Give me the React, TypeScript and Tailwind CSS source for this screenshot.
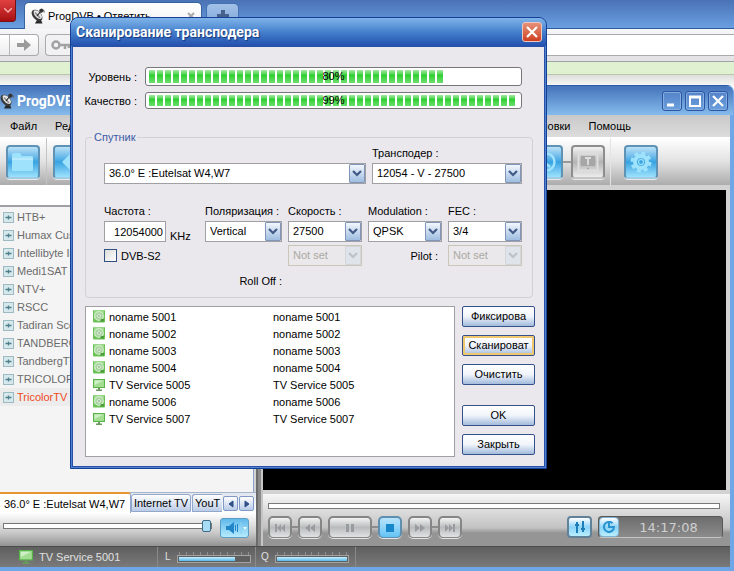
import { useState, type ReactNode } from 'react'
import clsx from 'clsx'

const providers = [
  'HTB+',
  'Humax Custom',
  'Intellibyte Inc',
  'Medi1SAT',
  'NTV+',
  'RSCC',
  'Tadiran Scopus',
  'TANDBERG',
  'TandbergTV',
  'TRICOLOR',
  'TricolorTV',
]

const services = [
  { name: 'noname 5001', kind: 'data' },
  { name: 'noname 5002', kind: 'data' },
  { name: 'noname 5003', kind: 'data' },
  { name: 'noname 5004', kind: 'data' },
  { name: 'TV Service 5005', kind: 'tv' },
  { name: 'noname 5006', kind: 'data' },
  { name: 'TV Service 5007', kind: 'tv' },
]

function DishIcon({ className }: { className?: string }) {
  return (
    <svg viewBox="0 0 14 16" className={className} aria-hidden="true">
      <path d="M7 10l3 2 1.500 3.500H4z" fill="#2a2a2a" />
      <ellipse cx="6" cy="7.300" rx="4.200" ry="6.600" transform="rotate(-42 6 7.300)" fill="#3a3a3a" />
      <ellipse cx="6.800" cy="6.600" rx="2.900" ry="5.400" transform="rotate(-42 6.800 6.600)" fill="#e6e6e6" />
      <path d="M4 4.500l5 5.500" stroke="#8a8a8a" strokeWidth="1.500" fill="none" />
      <path d="M6 8l4-5" stroke="#222" strokeWidth="1.200" fill="none" />
      <circle cx="10.200" cy="2.800" r="2" fill="#333" />
      <path d="M10.500 0.800a3.500 3.500 0 0 1 2.700 3.700" stroke="#444" fill="none" />
    </svg>
  )
}

function DiscIcon() {
  return (
    <svg viewBox="0 0 12 13" className="h-[13px] w-3" aria-hidden="true">
      <rect x="0" y="0" width="12" height="12.500" rx="1" fill="#6cc257" />
      <path d="M1 0h10v3L1 9z" fill="#9ad98a" />
      <circle cx="6" cy="6" r="4.300" fill="#a9d5a0" stroke="#cdebc6" strokeWidth="1.300" />
      <circle cx="6" cy="6" r="1.400" fill="#6f9d6a" stroke="#eef9ec" />
      <path d="M8 9h3v2.500H7z" fill="#4c9e3c" />
    </svg>
  )
}

function TvIcon({ className }: { className?: string }) {
  return (
    <svg viewBox="0 0 12 12" className={className} aria-hidden="true">
      <rect x="0.500" y="0.500" width="11" height="8" fill="#a2dd92" stroke="#58b348" />
      <path d="M1.500 1.500h9L1.500 6z" fill="#cff0c6" />
      <path d="M5 9h2v1.500h2V12H3v-1.500h2z" fill="#6a9a60" />
    </svg>
  )
}

function Combo({ id, options, label, disabled }: { id: string; options: string[]; label?: string; disabled?: boolean }) {
  return (
    <div className="grid w-full">
      <select
        id={id}
        aria-label={label}
        disabled={disabled}
        className={clsx(
          'col-start-1 row-start-1 h-[21px] w-full appearance-none border pr-4 pl-1 text-[11px] leading-none outline-none',
          disabled ? 'border-[#c9c7ba] bg-[#eae8ea] text-[#aaa8a4] opacity-100' : 'border-[#a0a0a4] bg-white text-black',
        )}
      >
        {options.map((o) => (
          <option key={o}>{o}</option>
        ))}
      </select>
      <span
        className={clsx(
          'pointer-events-none col-start-1 row-start-1 mr-px flex h-[19px] w-4 items-center justify-center self-center justify-self-end rounded-[1px] border',
          disabled
            ? 'border-[#d3d5da] bg-[#dfe4ea] text-[#bcc1c8]'
            : 'border-[#8095b8] bg-linear-to-b from-[#f2f7fd] to-[#9fbde0] text-[#3f5a86]',
        )}
      >
        <svg viewBox="0 0 10 7" className="h-[7px] w-[10px]" aria-hidden="true">
          <path d="M1 1l4 4 4-4" fill="none" stroke="currentColor" strokeWidth="2.200" />
        </svg>
      </span>
    </div>
  )
}

function Progress({ value, id, tall }: { value: number; id: string; tall?: boolean }) {
  const blocks = Array.from({ length: Math.round((46.5 * value) / 100) })
  return (
    <div
      role="progressbar"
      aria-labelledby={id}
      aria-valuenow={value}
      className={clsx('grid flex-1 rounded-[3px] border border-[#777779] bg-white', tall ? 'h-[19px]' : 'h-[17px]')}
    >
      <div className="col-start-1 row-start-1 flex gap-[2px] px-[3px] py-[2px]">
        {blocks.map((_, i) => (
          <span key={i} className="w-[6px] bg-linear-to-b from-[#a2e8a4] via-[#2bcf2f] via-40% to-[#6ade6d]" />
        ))}
      </div>
      <span className="col-start-1 row-start-1 self-center text-center leading-none">{value}%</span>
    </div>
  )
}

function PushButton({ children, hot, className }: { children: ReactNode; hot?: boolean; className?: string }) {
  return (
    <button
      type="button"
      className={clsx(
        'h-[21px] w-full overflow-hidden rounded-[2px] border border-[#34518c] bg-linear-to-b from-white via-[#f0f4fa] to-[#a3bbdc] text-[11px] leading-none whitespace-nowrap',
        hot && 'shadow-[inset_0_0_0_2px_#f0c870]',
        className,
      )}
    >
      {children}
    </button>
  )
}

function ToolButton({ label, off, children }: { label: string; off?: boolean; children: ReactNode }) {
  return (
    <button
      type="button"
      aria-label={label}
      className={clsx(
        'flex h-[34px] w-[34px] shrink-0 items-center justify-center rounded-[4px] border-2 shadow-[0_1px_0_#e8e8e8]',
        off
          ? 'border-[#8d8d8d] border-b-[#c5c5c5] bg-linear-to-b from-[#f2f2f2] via-[#b4b4b4] to-[#ededed] text-[#dedede]'
          : 'border-[#5e93b5] border-b-[#9fcbe4] bg-linear-to-b from-[#b9e1f6] via-[#35a3e2] to-[#9be2fc] text-[#9ee2fc]',
      )}
    >
      {children}
    </button>
  )
}

function PlayButton({ label, on, wide, children }: { label: string; on?: boolean; wide?: boolean; children: ReactNode }) {
  return (
    <button
      type="button"
      aria-label={label}
      className={clsx(
        'flex h-[22px] shrink-0 items-center justify-center rounded-[5px] border-2 border-b shadow-[0_1px_0_#e6e6e6]',
        wide ? 'w-[44px]' : 'w-[24px]',
        on
          ? 'border-[#5f8fae] bg-linear-to-b from-[#b8e4fb] to-[#62c3f5] text-[#1886cb]'
          : 'border-[#858585] bg-linear-to-b from-[#f3f3f3] via-[#b9bcbd] to-[#e0e2e3] text-[#999c9e]',
      )}
    >
      <svg viewBox="0 0 12 10" className="h-[10px] w-3" fill="currentColor" aria-hidden="true">
        {children}
      </svg>
    </button>
  )
}

function Link() {
  return <span className="h-[2px] w-[6px] bg-[#8c8c8c]" />
}

function Meter({ label, value }: { label: string; value: number }) {
  return (
    <div role="meter" aria-label={label} aria-valuenow={value} className="w-[74px]">
      <div className="flex justify-between px-[2px]">
        {Array.from({ length: 11 }).map((_, i) => (
          <span key={i} className="h-[3px] w-px bg-[#8f8f8f]" />
        ))}
      </div>
      <div className="h-[8px] border border-[#a3a3a3] bg-[#5f5f5f] p-px">
        <div className="h-full bg-linear-to-b from-[#c9effd] to-[#4db9ec]" style={{ width: `${value}%` }} />
      </div>
    </div>
  )
}

function Browser() {
  return (
    <div>
      <div className="flex h-[29px] items-end border-b border-[#2d5c9e] bg-linear-to-b from-[#4a73b5] to-[#6a9fe2]">
        <button type="button" aria-label="Меню" className="flex h-[22px] w-4 items-center justify-center self-start rounded-br-[4px] border-r border-b border-[#7a1010] bg-linear-to-b from-[#e04040] to-[#a80c10]">
          <svg viewBox="0 0 8 5" className="h-[5px] w-2" aria-hidden="true">
            <path d="M0 0l4 4 4-4" fill="none" stroke="#ffb0b0" strokeWidth="1.400" />
          </svg>
        </button>
        <div className="-mb-px ml-2 flex h-[27px] w-[178px] items-center rounded-t-[5px] border-x border-t border-[#39639f] bg-linear-to-b from-white to-[#f1f1f4] px-[6px]">
          <DishIcon className="h-4 w-[14px]" />
          <span className="ml-[3px] flex-1">ProgDVB • Ответить</span>
          <button type="button" aria-label="Закрыть вкладку">
            <svg viewBox="0 0 8 8" className="h-2 w-2" aria-hidden="true">
              <path d="M1 1l6 6M7 1L1 7" stroke="#aaa" strokeWidth="2" />
            </svg>
          </button>
        </div>
        <button type="button" aria-label="Новая вкладка" className="ml-1 flex h-[25px] w-[33px] items-center justify-center rounded-t-[5px] border border-[#4272b4] bg-linear-to-b from-[#a3c1e6] to-[#7ba5dc]">
          <svg viewBox="0 0 12 12" className="h-3 w-3" aria-hidden="true">
            <path d="M6 0v12M0 6h12" stroke="#46618b" strokeWidth="4" />
          </svg>
        </button>
      </div>
      <div className="flex h-[33px] items-center border-b border-[#a3a3a6] bg-linear-to-b from-[#f6f6f8] to-[#e2e2e5]">
        <div className="flex h-[22px] w-[39px] rounded-r-[4px] border border-l-0 border-[#aaaaac] bg-linear-to-b from-white to-[#ececee]">
          <span className="w-[10px] border-r border-[#b8b8ba]" />
          <button type="button" aria-label="Вперёд" className="flex flex-1 items-center justify-center">
            <svg viewBox="0 0 14 12" className="h-3 w-[14px]" aria-hidden="true">
              <path d="M0 4h7V0l7 6-7 6V8H0z" fill="#9b9b9b" />
            </svg>
          </button>
        </div>
        <div className="ml-[6px] flex h-[22px] flex-1 items-center rounded-l-[4px] border border-r-0 border-[#aaaaac] bg-linear-to-r from-[#f2f2f4] from-[40px] to-white to-[60px] pl-[5px]">
          <svg viewBox="0 0 20 10" className="h-[10px] w-5" fill="none" stroke="#a2a2a2" strokeWidth="2.500" aria-hidden="true">
            <circle cx="5" cy="5" r="3.500" />
            <path d="M8 5h11M14 5v4M18 5v3" />
          </svg>
        </div>
      </div>
      <div className="h-[13px] border-b border-[#b8c8a6] bg-[#e0f1d2]" />
      <div className="h-[12px] bg-linear-to-b from-[#ddd] to-[#fbfbf6]" />
    </div>
  )
}

function CaptionButton({ label, children }: { label: string; children: ReactNode }) {
  return (
    <button type="button" aria-label={label} className="flex h-5 w-5 items-center justify-center rounded-[3px] border border-[#2a56a4] bg-linear-to-b from-[#5583c8] to-[#6a9fdd] shadow-[inset_0_0_0_1px_#86ade0]">
      <svg viewBox="0 0 12 12" className="h-3 w-3" fill="none" stroke="#fff" strokeWidth="2" aria-hidden="true">
        {children}
      </svg>
    </button>
  )
}

function Sidebar() {
  const [volume, setVolume] = useState(100)
  return (
    <aside className="flex w-[256px] shrink-0 flex-col">
      <div className="h-5 shrink-0 bg-white" />
      <ul className="mr-[2px] flex-1 overflow-hidden border-t-2 border-r border-[#a0a0a4] border-r-[#8ba3cc] bg-[#f4f4f4] pt-px text-[#6b6b6b]">
        {providers.map((p) => (
          <li key={p} className={clsx('flex h-[18px] items-center gap-[3px] pl-[3px] whitespace-nowrap', p === 'TricolorTV' && 'bg-[#ececec] text-[#f04a1c]')}>
            <svg viewBox="0 0 11 11" className="h-[11px] w-[11px] shrink-0" aria-hidden="true">
              <rect x="0.500" y="0.500" width="10" height="10" fill="#d5e8ec" stroke="#9dbac2" />
              <path d="M2.500 5.500h6M5.500 3.500v4" stroke="#4f7f8c" strokeWidth="1.300" />
            </svg>
            {p}
          </li>
        ))}
      </ul>
      <div className="flex h-[21px] shrink-0 border-t border-[#a6b4cc] bg-linear-to-b from-[#e2e6ee] to-white whitespace-nowrap">
        <button type="button" className="-mt-px h-[21px] w-[131px] shrink-0 rounded-tr-[3px] border-t-2 border-r border-[#e6962e] border-r-[#91a7cb] bg-white pl-1 text-left">
          36.0° E :Eutelsat W4,W7
        </button>
        <button type="button" className="mt-px h-[18px] w-[60px] shrink-0 rounded-t-[3px] border border-[#91a7cb] bg-linear-to-b from-white to-[#bccce6] leading-none">
          Internet TV
        </button>
        <button type="button" className="mt-px ml-px h-[18px] w-[30px] shrink-0 rounded-tl-[3px] border border-r-0 border-[#91a7cb] bg-linear-to-b from-white to-[#bccce6] pl-[2px] text-left leading-none">
          YouT
        </button>
        {['M6 1L2 4l4 3z', 'M2 1l4 3-4 3z'].map((d, i) => (
          <button key={d} type="button" aria-label={i ? 'Следующая вкладка' : 'Предыдущая вкладка'} className="mt-[3px] ml-px flex h-[15px] w-[15px] shrink-0 items-center justify-center rounded-[2px] border border-[#8199c6] bg-linear-to-b from-white to-[#b9cbe8]">
            <svg viewBox="0 0 8 8" className="h-2 w-2" aria-hidden="true">
              <path d={d} fill="#2f4f86" stroke="#2f4f86" />
            </svg>
          </button>
        ))}
      </div>
      <div className="h-[33px] shrink-0 bg-linear-to-b from-white via-[#c9c9c9] via-60% to-[#939393] pt-[5px] pr-[7px] pl-[3px]">
        <div className="flex items-center">
          <input
            type="range"
            aria-label="Громкость"
            value={volume}
            onChange={(e) => setVolume(Number(e.target.value))}
            className="-mt-1 h-3 min-w-0 flex-1 appearance-none bg-transparent [&::-webkit-slider-runnable-track]:h-[6px] [&::-webkit-slider-runnable-track]:border [&::-webkit-slider-runnable-track]:border-[#777] [&::-webkit-slider-runnable-track]:bg-white [&::-webkit-slider-thumb]:-mt-[4px] [&::-webkit-slider-thumb]:h-3 [&::-webkit-slider-thumb]:w-[9px] [&::-webkit-slider-thumb]:appearance-none [&::-webkit-slider-thumb]:rounded-[2px] [&::-webkit-slider-thumb]:border [&::-webkit-slider-thumb]:border-[#3c6c88] [&::-webkit-slider-thumb]:bg-[#a9ddf5]"
          />
          <button type="button" aria-label="Звук" className="ml-2 flex h-5 w-[29px] items-center justify-center rounded-[3px] border border-[#5e9cc4] bg-linear-to-b from-[#5fb8ea] to-[#b5ecfd]">
            <svg viewBox="0 0 24 12" className="h-3 w-6" aria-hidden="true">
              <path d="M3 4h3l5-4v12L6 8H3z" fill="#2285c8" />
              <path d="M12.500 3v6M14.500 2v8" stroke="#2285c8" />
              <path d="M18 0v12" stroke="#8ed2f4" />
              <path d="M20 5h4l-2 3z" fill="#e8faff" />
            </svg>
          </button>
        </div>
      </div>
    </aside>
  )
}

function Player() {
  return (
    <section className="flex min-w-0 flex-1 flex-col bg-[#d2d2d2]">
      <div className="mt-[5px] mr-1 mb-1 flex-1 bg-black" />
      <div className="h-[52px] shrink-0 bg-linear-to-b from-[#f6f6f6] from-0% via-[#c2c2c2] via-65% to-[#959595] to-75% pt-[9px] pr-[7px] pl-[5px]">
        <div className="pr-[3px]">
          <input
            type="range"
            aria-label="Позиция"
            defaultValue={0}
            className="block h-[6px] w-full appearance-none border border-[#7a7a7a] bg-white [&::-webkit-slider-thumb]:appearance-none"
          />
        </div>
        <div className="mt-[7px] flex items-center">
          <PlayButton label="В начало">
            <path d="M1 1h2v8H1zM7 1v8L3 5zM11 1v8L7 5z" />
          </PlayButton>
          <Link />
          <PlayButton label="Назад">
            <path d="M6 1v8L1 5zM11 1v8L6 5z" />
          </PlayButton>
          <span className="w-[6px]" />
          <PlayButton label="Пауза" wide>
            <path d="M2 1h3v8H2zM7 1h3v8H7z" />
          </PlayButton>
          <Link />
          <PlayButton label="Стоп" on>
            <path d="M2 1h8v8H2z" />
          </PlayButton>
          <span className="w-[6px]" />
          <PlayButton label="Вперёд">
            <path d="M1 1v8l5-4zM6 1v8l5-4z" />
          </PlayButton>
          <Link />
          <PlayButton label="В конец">
            <path d="M9 1h2v8H9zM1 1v8l4-4zM5 1v8l4-4z" />
          </PlayButton>
          <button type="button" aria-label="Эквалайзер" className="mr-[6px] ml-auto flex h-[22px] w-[25px] items-center justify-center rounded-[4px] border-2 border-[#618198] bg-linear-to-b from-white via-[#8bd3f8] to-[#b9effd]">
            <svg viewBox="0 0 14 12" className="h-3 w-[14px]" stroke="#1c7db8" strokeWidth="2" aria-hidden="true">
              <path d="M4 1v11M10 0v11M2 4h4M8 8h4" />
            </svg>
          </button>
          <div className="flex h-[22px] w-[125px] items-center rounded-[4px] border border-[#585858] border-b-[#c4c4c4] bg-linear-to-b from-[#6d6d6d] to-[#8b8b8b]">
            <button type="button" aria-label="Часы" className="flex h-5 w-5 items-center justify-center rounded-[4px] border border-[#7fb2d0] bg-linear-to-b from-white via-[#8bd3f8] to-[#b9effd]">
              <svg viewBox="0 0 12 12" className="h-3 w-3" fill="none" stroke="#2b93d0" strokeWidth="2" aria-hidden="true">
                <path d="M9.500 2.300A5 5 0 1 0 11 6H6V1" />
              </svg>
            </button>
            <time className="flex-1 pr-1 text-center font-['DejaVu_Sans',sans-serif] text-[13px] leading-none text-[#cfcfcf]">14:17:08</time>
          </div>
        </div>
      </div>
    </section>
  )
}

function MainWindow() {
  return (
    <main className="absolute inset-x-0 top-[85px] bottom-0 flex flex-col rounded-tr-[7px] border-t border-r-4 border-b-4 border-[#6ea6e8] border-t-[#2c5ca8] bg-[#d2d2d2]">
      <header className="-mr-[3px] flex h-[29px] shrink-0 items-center gap-[3px] rounded-tr-[6px] bg-linear-to-b from-[#4573ba] to-[#86bcec] pr-[5px]">
        <DishIcon className="h-4 w-[14px] shrink-0" />
        <h1 className="flex-1 font-[Roboto,sans-serif] text-[14px] leading-none font-bold text-white">ProgDVB</h1>
        <CaptionButton label="Свернуть">
          <path d="M1 10h7" strokeWidth="3" />
        </CaptionButton>
        <CaptionButton label="Развернуть">
          <path d="M1 1.500h10v9.500H1zM1 2.500h10" />
        </CaptionButton>
        <CaptionButton label="Закрыть">
          <path d="M1 1l10 10M11 1L1 11" strokeWidth="2.300" />
        </CaptionButton>
      </header>
      <nav className="flex h-[23px] shrink-0 items-center border-b border-white bg-linear-to-b from-[#c9c9c9] to-[#dcdcdc] pl-[10px]">
        <button type="button">Файл</button>
        <button type="button" className="ml-[18px]">Редактор</button>
        <button type="button" className="mr-[18px] ml-auto">Установки</button>
        <button type="button" className="mr-[99px]">Помощь</button>
      </nav>
      <div className="flex h-[47px] shrink-0 items-center bg-linear-to-b from-white via-[#e2e2e2] to-[#acacac] pl-[6px]">
        <ToolButton label="Открыть">
          <svg viewBox="0 0 22 20" className="h-5 w-[22px]" aria-hidden="true">
            <path d="M0 3q0-2 2-2h6l2 3h10q1 0 1 1v13q0 1-1 1H1q-1 0-1-1z" fill="currentColor" />
            <path d="M0 7h21" stroke="#d6f3fe" />
          </svg>
        </ToolButton>
        <span className="mx-[6px] h-full w-px bg-[#c4c4c4]" />
        <ToolButton label="Назад">
          <svg viewBox="0 0 20 20" className="h-5 w-5" aria-hidden="true">
            <path d="M11 1L2 10l9 9v-5h8V6h-8z" fill="currentColor" />
          </svg>
        </ToolButton>
        <span className="ml-auto" />
        <ToolButton label="Расписание">
          <svg viewBox="0 0 22 22" className="h-[22px] w-[22px]" fill="none" stroke="currentColor" strokeWidth="2.500" aria-hidden="true">
            <circle cx="11" cy="11" r="8.500" />
            <path d="M9 5v6l6 5" />
          </svg>
        </ToolButton>
        <span className="h-[2px] w-2 bg-[#999]" />
        <ToolButton label="Телетекст" off>
          <svg viewBox="0 0 22 20" className="h-5 w-[22px]" fill="none" stroke="currentColor" strokeWidth="2" aria-hidden="true">
            <rect x="1.500" y="1.500" width="19" height="17" />
            <rect x="4" y="4" width="14" height="10" fill="#a6a6a6" stroke="none" />
            <path d="M8 6h6M11 6v7" strokeWidth="1.800" />
            <path d="M10 16.500h2" stroke="#aaa" strokeWidth="1.500" />
          </svg>
        </ToolButton>
        <span className="mr-[13px] ml-[5px] h-full w-px bg-[#e4e4e4]" />
        <ToolButton label="Настройки">
          <svg viewBox="0 0 22 22" className="h-[22px] w-[22px]" fill="none" stroke="currentColor" aria-hidden="true">
            <circle cx="11" cy="11" r="8.800" strokeWidth="3.400" strokeDasharray="3.900 3.010" />
            <circle cx="11" cy="11" r="6" strokeWidth="4" />
            <circle cx="11" cy="11" r="2.500" strokeWidth="1.200" />
          </svg>
        </ToolButton>
        <span className="w-[72px]" />
      </div>
      <div className="flex min-h-0 flex-1">
        <Sidebar />
        <div className="w-[7px] shrink-0 border-x-2 border-l-[#6b6b6b] border-r-[#c5c5c5] bg-[#8a8a8a]" />
        <Player />
      </div>
      <footer className="flex h-[21px] shrink-0 items-center border-t border-[#4c4c4c] bg-linear-to-b from-[#5f5f5f] to-[#7a7a7a] text-[#e0e0e0]">
        <TvIcon className="ml-[19px] h-[14px] w-[14px] shrink-0" />
        <span className="ml-[6px] w-[118px]">TV Service 5001</span>
        <span className="h-full w-px bg-[#8a8a8a]" />
        <span className="w-[19px] pl-[7px] text-[10px]">L</span>
        <Meter label="Уровень" value={80} />
        <span className="ml-1 h-full w-px bg-[#8a8a8a]" />
        <span className="w-[19px] pl-[5px] text-[10px]">Q</span>
        <Meter label="Качество" value={100} />
        <span className="ml-[6px] h-full w-px bg-[#8a8a8a]" />
      </footer>
    </main>
  )
}

function ScanDialog() {
  return (
    <div role="dialog" aria-labelledby="scan-title" className="absolute top-[17px] left-[70px] flex w-[477px] flex-col rounded-t-[8px] border border-[#173f93] bg-[#4f82d2]">
      <header className="flex h-[28px] items-center justify-between rounded-t-[7px] bg-linear-to-b from-[#7fb4ea] via-[#4580cc] to-[#2450ae] pr-1 pl-[5px]">
        <h2 id="scan-title" className="font-[Roboto,sans-serif] text-[14px] leading-none font-bold text-white [text-shadow:1px_1px_1px_#15377c]">
          Сканирование трансподера
        </h2>
        <button type="button" aria-label="Закрыть" className="flex h-5 w-5 items-center justify-center rounded-[3px] border border-[#f0c6bc] bg-linear-to-b from-[#e59078] to-[#cf3d1c]">
          <svg viewBox="0 0 12 12" className="h-3 w-3" aria-hidden="true">
            <path d="M1 1l10 10M11 1L1 11" stroke="#fff" strokeWidth="2.200" />
          </svg>
        </button>
      </header>
      <form className="mx-px mb-px border border-[#2850a4] bg-[#eae8ed] pt-[20px] pr-[9px] pb-[9px] pl-3" onSubmit={(e) => e.preventDefault()}>
        <div className="-ml-2 flex flex-col gap-[6px] pr-[13px] whitespace-nowrap">
          <div className="flex items-center">
            <span id="level" className="w-[68px] pr-2 text-right">Уровень :</span>
            <Progress id="level" value={80} tall />
          </div>
          <div className="flex items-center">
            <span id="quality" className="w-[68px] pr-2 text-right">Качество :</span>
            <Progress id="quality" value={99} />
          </div>
        </div>

        <fieldset className="mt-5 mr-[2px] rounded-[4px] border border-[#d2d1d6] pr-[10px] pb-[7px] pl-[18px]">
          <legend className="-ml-[12px] px-[2px] leading-4 text-[#3b5ba6]">Спутник</legend>
          <div className="flex items-end gap-[6px]">
            <div className="flex-1">
              <Combo id="satellite" label="Спутник" options={['36.0° E :Eutelsat W4,W7']} />
            </div>
            <div className="w-[150px]">
              <label htmlFor="transponder" className="block h-[18px] leading-4">Трансподер :</label>
              <Combo id="transponder" options={['12054 - V - 27500']} />
            </div>
          </div>

          <div className="mt-[18px] grid grid-cols-[95fr_77fr_74fr_74fr_74fr] gap-x-[6px] gap-y-[3px] whitespace-nowrap">
            <div>
              <label htmlFor="freq" className="block h-[19px] leading-[18px]">Частота :</label>
              <div className="flex items-end gap-1">
                <input id="freq" defaultValue="12054000" className="h-[21px] w-[62px] border border-[#a0a0a4] bg-white px-[2px] text-right text-[11px]" />
                <span className="leading-3">KHz</span>
              </div>
            </div>
            <div>
              <label htmlFor="polar" className="block h-[19px] leading-[18px]">Поляризация :</label>
              <Combo id="polar" options={['Vertical', 'Horizontal']} />
            </div>
            <div>
              <label htmlFor="rate" className="block h-[19px] leading-[18px]">Скорость :</label>
              <Combo id="rate" options={['27500']} />
            </div>
            <div>
              <label htmlFor="modulation" className="block h-[19px] leading-[18px]">Modulation :</label>
              <Combo id="modulation" options={['QPSK']} />
            </div>
            <div>
              <label htmlFor="fec" className="block h-[19px] leading-[18px]">FEC :</label>
              <Combo id="fec" options={['3/4']} />
            </div>

            <label className="col-span-2 flex items-center gap-1">
              <input type="checkbox" className="h-[13px] w-[13px] appearance-none border border-[#2f5080] bg-linear-to-br from-[#dcdcda] to-white" />
              DVB-S2
            </label>
            <Combo id="rolloff" options={['Not set']} disabled />
            <label htmlFor="pilot" className="self-center pr-1 text-right">Pilot :</label>
            <Combo id="pilot" options={['Not set']} disabled />

            <label htmlFor="rolloff" className="col-span-2 pt-[3px] text-right leading-[18px]">Roll Off :</label>
          </div>
        </fieldset>

        <div className="mt-2 flex gap-[7px]">
          <div className="h-[151px] flex-1 border border-[#a0a0a4] bg-white pt-px pl-[7px]">
            <table className="w-full">
              <tbody>
                {services.map((s) => (
                  <tr key={s.name} className="h-[17px]">
                    <td className="w-4 p-0">{s.kind === 'tv' ? <TvIcon className="h-3 w-3" /> : <DiscIcon />}</td>
                    <td className="w-[164px] p-0">{s.name}</td>
                    <td className="p-0">{s.name}</td>
                  </tr>
                ))}
              </tbody>
            </table>
          </div>
          <div className="flex w-[73px] flex-col gap-2">
            <PushButton>Фиксирова</PushButton>
            <PushButton hot>Сканироват</PushButton>
            <PushButton>Очистить</PushButton>
            <PushButton className="mt-3">OK</PushButton>
            <PushButton>Закрыть</PushButton>
          </div>
        </div>
      </form>
    </div>
  )
}

export default function App() {
  return (
    <div className="relative h-screen overflow-hidden bg-white font-['Liberation_Sans',Arial,sans-serif] text-[11px] leading-4 text-black">
      <Browser />
      <MainWindow />
      <ScanDialog />
    </div>
  )
}
